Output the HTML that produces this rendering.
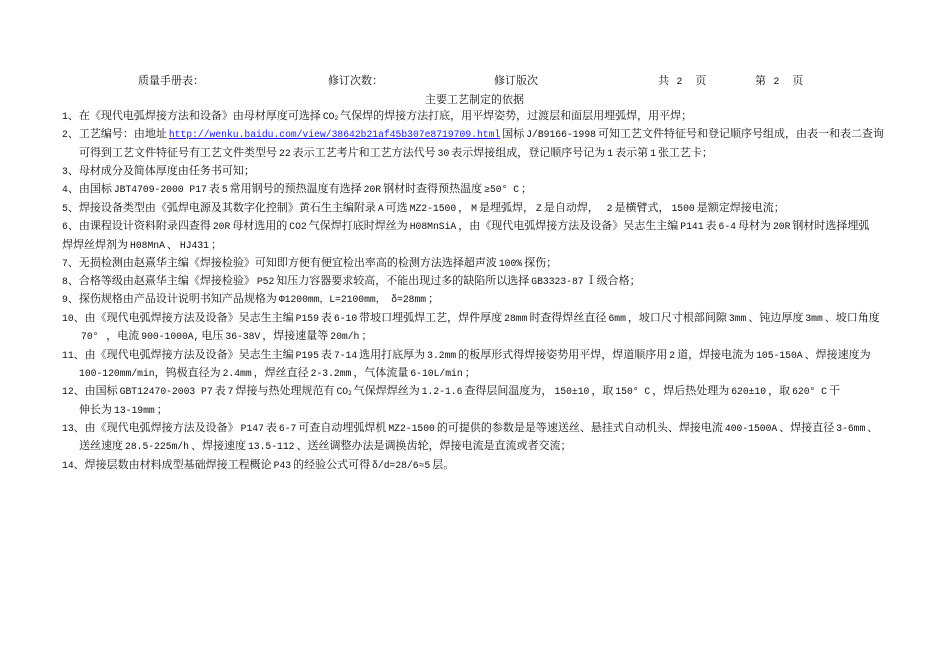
<!DOCTYPE html>
<html><head><meta charset="utf-8"><style>
html,body{margin:0;padding:0;background:#fff;width:950px;height:672px;overflow:hidden}
body{position:relative;font-family:"Liberation Serif","Noto Serif CJK SC",serif;font-size:11px;color:#111}
.l{position:absolute;white-space:nowrap;line-height:14px;height:14px}
i{font-style:normal;font-family:"Liberation Mono","Noto Serif CJK SC",monospace;font-size:9.7px;padding:0 2px}
a{color:#1a1aff;text-decoration:underline}
sub{font-size:6px;vertical-align:-1px}
</style></head><body>
<div class="l" style="left:138px;top:74px">质量手册表：</div>
<div class="l" style="left:328px;top:74px">修订次数：</div>
<div class="l" style="left:494px;top:74px">修订版次</div>
<div class="l" style="left:658px;top:74px">共&nbsp;&nbsp;<i>2</i>&nbsp;&nbsp;&nbsp;&nbsp;页</div>
<div class="l" style="left:755px;top:74px">第&nbsp;&nbsp;<i>2</i>&nbsp;&nbsp;&nbsp;&nbsp;页</div>
<div class="l" style="left:425px;top:93px">主要工艺制定的依据</div>
<div class="l" style="left:62px;top:109px"><i style="padding:0">1</i>、在《现代电弧焊接方法和设备》由母材厚度可选择<i>CO<sub>2</sub></i>气保焊的焊接方法打底，用平焊姿势，过渡层和面层用埋弧焊，用平焊；</div>
<div class="l" style="left:62px;top:127px"><i style="padding:0">2</i>、工艺编号：由地址<i><a>http://wenku.baidu.com/view/38642b21af45b307e8719709.html</a></i>国标<i>J/B9166-1998</i>可知工艺文件特征号和登记顺序号组成，由表一和表二查询</div>
<div class="l" style="left:79px;top:146px">可得到工艺文件特征号有工艺文件类型号<i>22</i>表示工艺考片和工艺方法代号<i>30</i>表示焊接组成，登记顺序号记为<i>1</i>表示第<i>1</i>张工艺卡；</div>
<div class="l" style="left:62px;top:164px"><i style="padding:0">3</i>、母材成分及简体厚度由任务书可知；</div>
<div class="l" style="left:62px;top:182px"><i style="padding:0">4</i>、由国标<i>JBT4709-2000 P17</i>表<i>5</i>常用钢号的预热温度有选择<i>20R</i>钢材时查得预热温度<i>≥50° C</i>；</div>
<div class="l" style="left:62px;top:201px"><i style="padding:0">5</i>、焊接设备类型由《弧焊电源及其数字化控制》黄石生主编附录<i>A</i>可选<i>MZ2-1500</i>，<i>M</i>是埋弧焊，<i>Z</i>是自动焊，<i>&nbsp;2</i>是横臂式，<i>1500</i>是额定焊接电流；</div>
<div class="l" style="left:62px;top:219px"><i style="padding:0">6</i>、由课程设计资料附录四查得<i>20R</i>母材选用的<i>CO2</i>气保焊打底时焊丝为<i>H08MnSiA</i>，由《现代电弧焊接方法及设备》吴志生主编<i>P141</i>表<i>6-4</i>母材为<i>20R</i>钢材时选择埋弧</div>
<div class="l" style="left:62px;top:238px">焊焊丝焊剂为<i>H08MnA</i>、<i>HJ431</i>；</div>
<div class="l" style="left:62px;top:256px"><i style="padding:0">7</i>、无损检测由赵熹华主编《焊接检验》可知即方便有便宜检出率高的检测方法选择超声波<i>100%</i>探伤；</div>
<div class="l" style="left:62px;top:274px"><i style="padding:0">8</i>、合格等级由赵熹华主编《焊接检验》<i>P52</i>知压力容器要求较高，不能出现过多的缺陷所以选择<i>GB3323-87</i>Ⅰ级合格；</div>
<div class="l" style="left:62px;top:292px"><i style="padding:0">9</i>、探伤规格由产品设计说明书知产品规格为<i>Φ1200mm，L=2100mm， δ=28mm</i>；</div>
<div class="l" style="left:62px;top:311px"><i style="padding:0">10</i>、由《现代电弧焊接方法及设备》吴志生主编<i>P159</i>表<i>6-10</i>带坡口埋弧焊工艺，焊件厚度<i>28mm</i>时查得焊丝直径<i>6mm</i>，坡口尺寸根部间隙<i>3mm</i>、钝边厚度<i>3mm</i>、坡口角度</div>
<div class="l" style="left:79px;top:329px"><i>70° </i>，电流<i>900-1000A,</i>电压<i>36-38V</i>，焊接速量等<i>20m/h</i>；</div>
<div class="l" style="left:62px;top:348px"><i style="padding:0">11</i>、由《现代电弧焊接方法及设备》吴志生主编<i>P195</i>表<i>7-14</i>选用打底厚为<i>3.2mm</i>的板厚形式得焊接姿势用平焊，焊道顺序用<i>2</i>道，焊接电流为<i>105-150A</i>、焊接速度为</div>
<div class="l" style="left:79px;top:366px"><i style="padding:0">100-120mm/min</i>，钨极直径为<i>2.4mm</i>，焊丝直径<i>2-3.2mm</i>，气体流量<i>6-10L/min</i>；</div>
<div class="l" style="left:62px;top:384px"><i style="padding:0">12</i>、由国标<i>GBT12470-2003 P7</i>表<i>7</i>焊接与热处理规范有<i>CO<sub>2</sub></i>气保焊焊丝为<i>1.2-1.6</i>查得层间温度为，<i>150±10</i>，取<i>150° C</i>，焊后热处理为<i>620±10</i>，取<i>620° C</i>干</div>
<div class="l" style="left:79px;top:403px">伸长为<i>13-19mm</i>；</div>
<div class="l" style="left:62px;top:421px"><i style="padding:0">13</i>、由《现代电弧焊接方法及设备》<i>P147</i>表<i>6-7</i>可查自动埋弧焊机<i>MZ2-1500</i>的可提供的参数是是等速送丝、悬挂式自动机头、焊接电流<i>400-1500A</i>、焊接直径<i>3-6mm</i>、</div>
<div class="l" style="left:79px;top:439px">送丝速度<i>28.5-225m/h</i>、焊接速度<i>13.5-112</i>、送丝调整办法是调换齿轮，焊接电流是直流或者交流；</div>
<div class="l" style="left:62px;top:458px"><i style="padding:0">14</i>、焊接层数由材料成型基础焊接工程概论<i>P43</i>的经验公式可得<i>δ/d=28/6≈5</i>层。</div>
</body></html>
